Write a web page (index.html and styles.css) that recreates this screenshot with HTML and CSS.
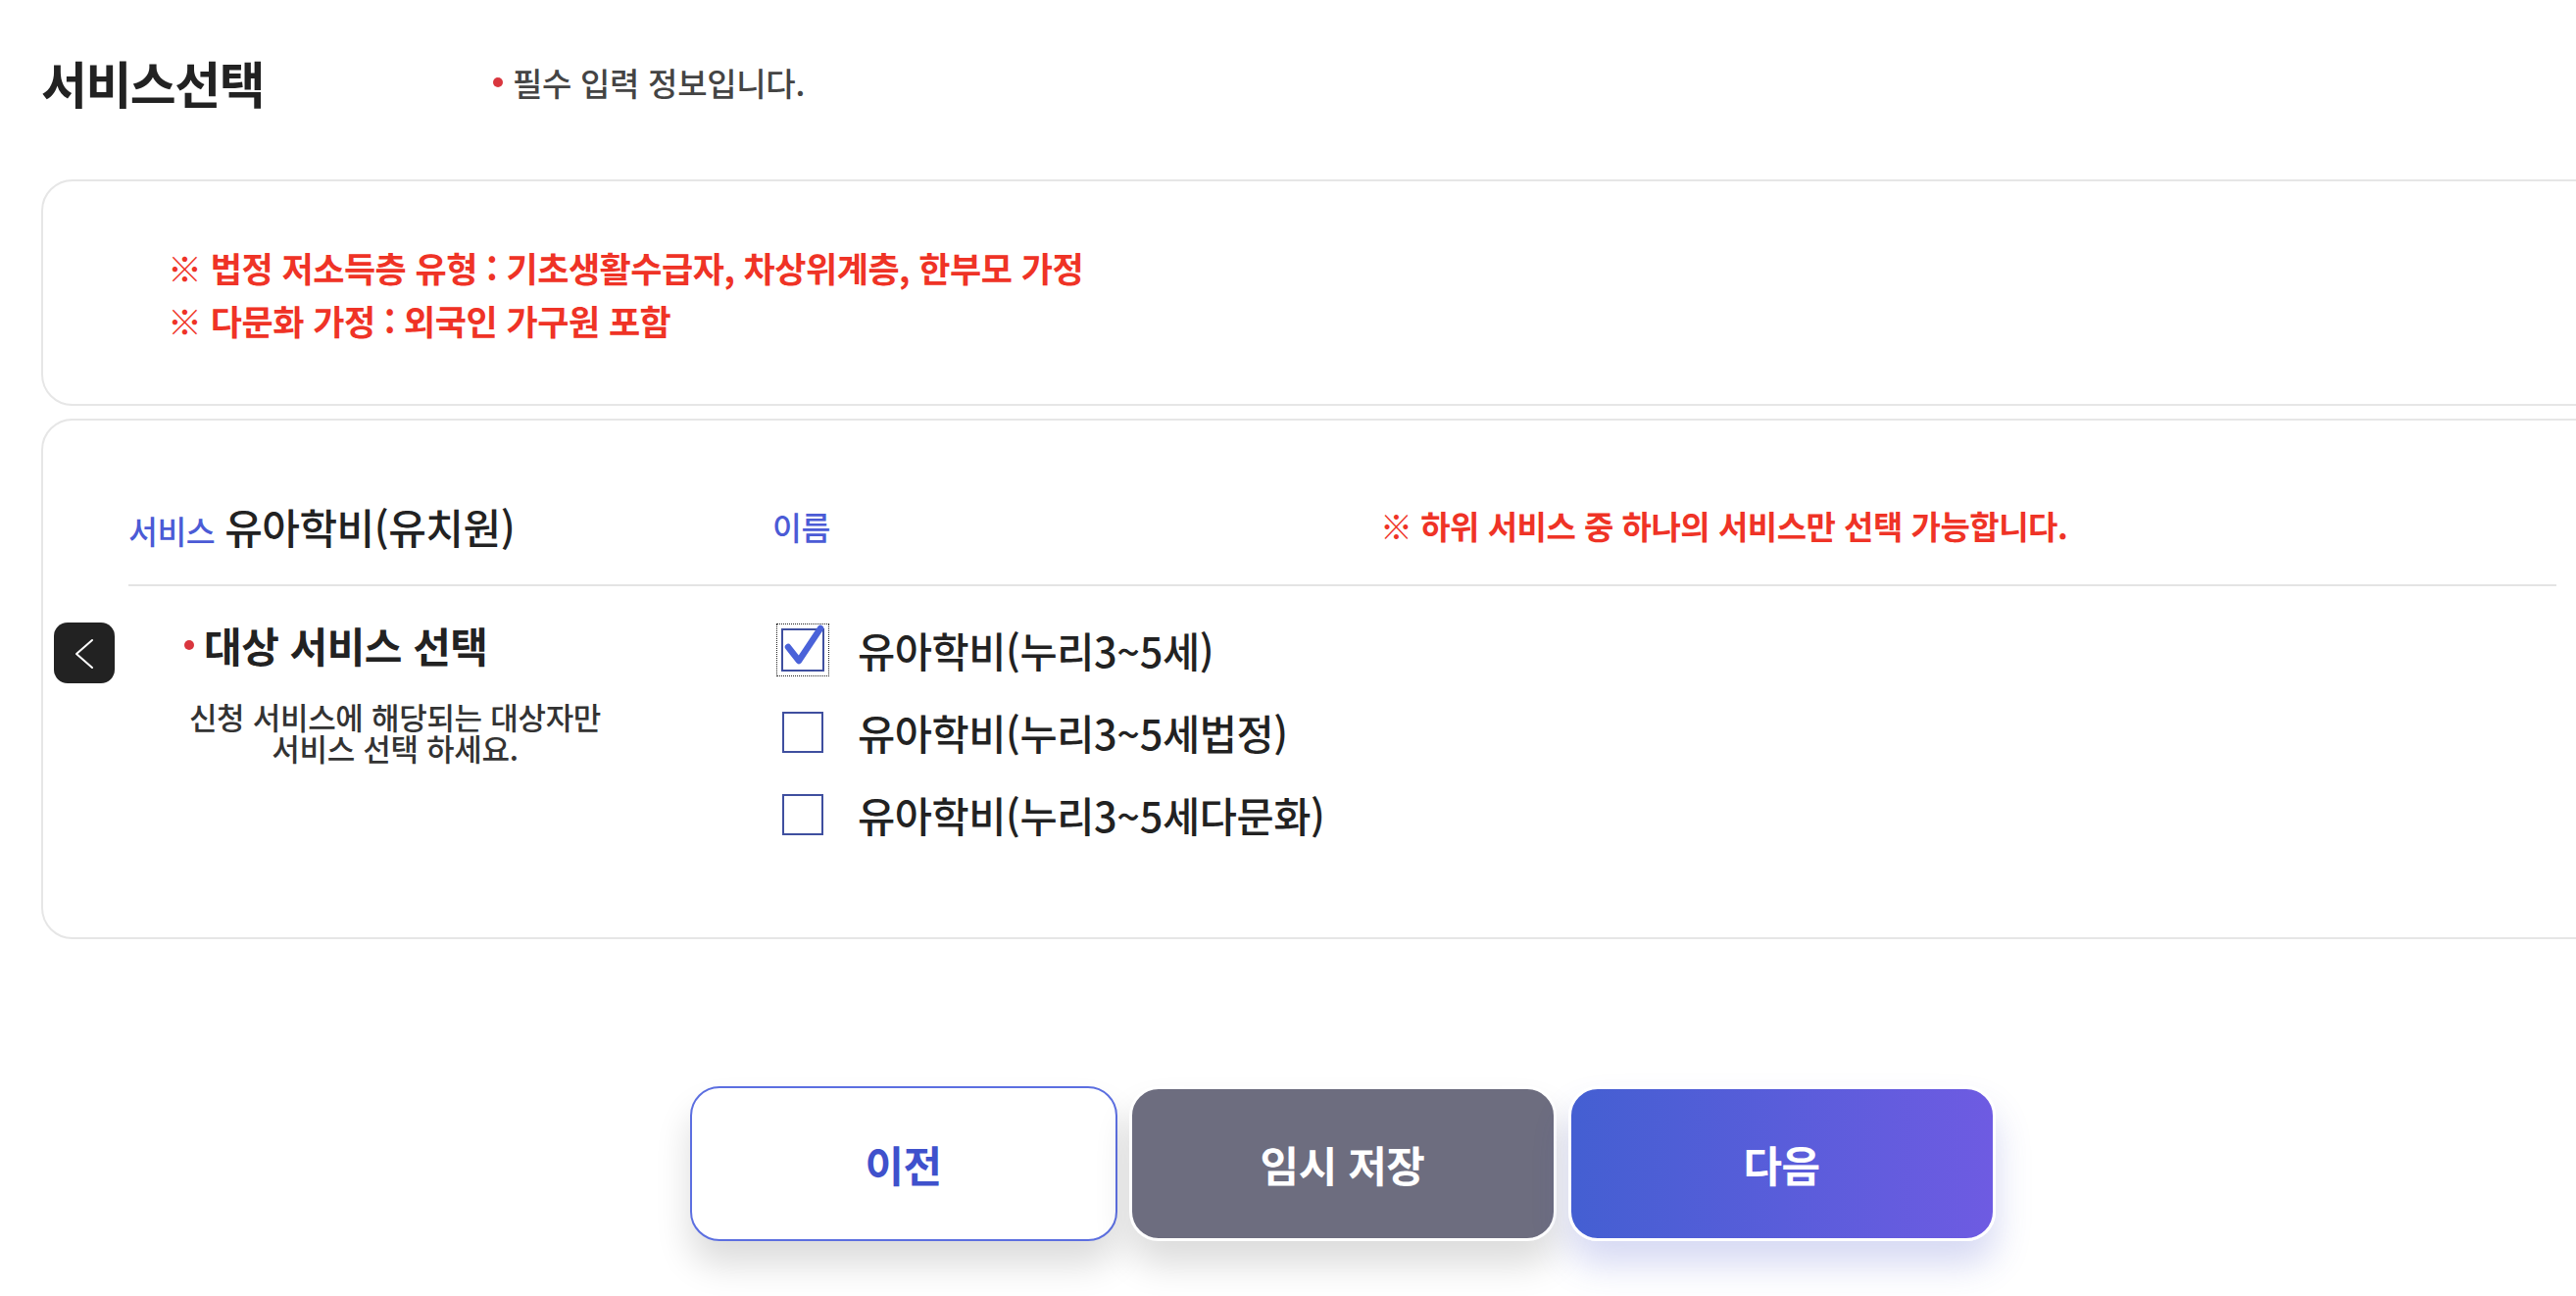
FILE: index.html
```html
<!DOCTYPE html>
<html lang="ko">
<head>
<meta charset="utf-8">
<title>서비스선택</title>
<link rel="stylesheet" href="styles.css">
</head>
<body>
<div class="page">
  <header class="page-head">
    <h1 class="page-title">서비스선택</h1>
    <p class="req-note"><span class="dot"></span>필수 입력 정보입니다.</p>
  </header>

  <section class="card notice">
    <p>※ 법정 저소득층 유형 : 기초생활수급자, 차상위계층, 한부모 가정</p>
    <p>※ 다문화 가정 : 외국인 가구원 포함</p>
  </section>

  <section class="card service">
    <button class="side-back" type="button" aria-label="이전">
      <svg width="62" height="62" viewBox="0 0 62 62"><path d="M39 18 L23 32 L39 46" fill="none" stroke="#fff" stroke-width="2" stroke-linecap="round" stroke-linejoin="round"/></svg>
    </button>
    <div class="svc-head">
      <div class="col-service"><span class="lbl">서비스</span><span class="val">유아학비(유치원)</span></div>
      <div class="col-name"><span class="lbl">이름</span></div>
      <div class="col-warn">※ 하위 서비스 중 하나의 서비스만 선택 가능합니다.</div>
    </div>
    <div class="svc-body">
      <div class="body-left">
        <h2 class="body-title"><span class="dot"></span>대상 서비스 선택</h2>
        <p class="body-desc">신청 서비스에 해당되는 대상자만<br>서비스 선택 하세요.</p>
      </div>
      <ul class="options">
        <li class="option">
          <span class="check checked">
            <svg width="58" height="58" viewBox="0 0 58 58"><rect x="8" y="9" width="42" height="42" fill="#fff" stroke="#3f4f9f" stroke-width="2"/><path d="M14 27 L25 41 L47 8" fill="none" stroke="#4a62d9" stroke-width="6.5" stroke-linecap="round" stroke-linejoin="round"/></svg>
          </span>
          <span class="opt-label">유아학비(누리3~5세)</span>
        </li>
        <li class="option">
          <span class="check"></span>
          <span class="opt-label">유아학비(누리3~5세법정)</span>
        </li>
        <li class="option">
          <span class="check"></span>
          <span class="opt-label">유아학비(누리3~5세다문화)</span>
        </li>
      </ul>
    </div>
  </section>

  <div class="actions">
    <button class="btn btn-prev" type="button">이전</button>
    <button class="btn btn-save" type="button">임시 저장</button>
    <button class="btn btn-next" type="button">다음</button>
  </div>
</div>
</body>
</html>
```

FILE: styles.css
```css
html {
  overflow: hidden;
  background: #fff;
}
body {
  margin: 0;
  padding: 0;
  font-family: "Noto Sans CJK KR", "Noto Sans", sans-serif;
  color: #222;
}
.page {
  width: 2655px;
  margin-left: 42px;
  padding-top: 52px;
  padding-bottom: 60px;
}
.page-head {
  display: flex;
  align-items: center;
  height: 64px;
  margin-bottom: 67px;
}
.page-title {
  width: 461px;
  margin: 0;
  font-size: 51px;
  font-weight: 700;
  letter-spacing: -1.5px;
  line-height: 64px;
  color: #222;
}
.req-note {
  margin: 0;
  display: flex;
  align-items: center;
  font-size: 33px;
  font-weight: 500;
  letter-spacing: -0.3px;
  color: #444;
}
.dot {
  display: inline-block;
  width: 10px;
  height: 10px;
  border-radius: 50%;
  background: #d9363e;
  margin-right: 10px;
}
.card {
  border: 2px solid #e6e6e6;
  border-radius: 32px;
  background: #fff;
}
.notice {
  padding: 61px 0 58px 127px;
}
.notice p {
  margin: 0;
  font-size: 35px;
  font-weight: 700;
  line-height: 54px;
  color: #ef3326;
  letter-spacing: -0.5px;
}
.service {
  position: relative;
  margin-top: 13px;
  padding: 82px 87px 83px 87px;
}
.side-back {
  position: absolute;
  left: 11px;
  top: 206px;
  width: 62px;
  height: 62px;
  padding: 0;
  border: 0;
  border-radius: 14px;
  background: #222;
  display: flex;
  align-items: center;
  justify-content: center;
}
.svc-head {
  display: flex;
  align-items: center;
  height: 50px;
  padding-bottom: 35px;
  border-bottom: 2px solid #e4e4e4;
}
.col-service {
  width: 657px;
  display: flex;
  align-items: baseline;
}
.col-name {
  width: 620px;
}
.lbl {
  font-size: 32.5px;
  font-weight: 500;
  color: #4b5bd6;
  letter-spacing: -0.5px;
  margin-right: 10px;
}
.val {
  font-size: 42px;
  font-weight: 500;
  color: #222;
  letter-spacing: -0.5px;
}
.col-warn {
  font-size: 33px;
  font-weight: 700;
  color: #ef3326;
  letter-spacing: -0.5px;
}
.svc-body {
  display: flex;
  padding-top: 23px;
}
.body-left {
  width: 667px;
}
.body-title {
  margin: 9px 0 0;
  padding-left: 57px;
  display: flex;
  align-items: center;
  font-size: 42px;
  font-weight: 700;
  line-height: 56px;
  letter-spacing: -0.5px;
  color: #222;
}
.body-desc {
  width: 544px;
  margin: 29px 0 0;
  text-align: center;
  font-size: 31px;
  font-weight: 500;
  line-height: 32px;
  letter-spacing: -0.3px;
  color: #333;
}
.options {
  list-style: none;
  margin: 0;
  padding: 0;
}
.option {
  display: flex;
  align-items: center;
  height: 84px;
}
.check {
  position: relative;
  width: 42px;
  height: 42px;
  box-sizing: border-box;
  border: 2px solid #3f4f9f;
  background: #fff;
  margin-right: 35px;
  flex: none;
}
.check.checked {
  border: 0;
  outline: 1px dotted #222;
  outline-offset: 5px;
}
.check.checked svg {
  position: absolute;
  left: -8px;
  top: -9px;
}
.opt-label {
  font-size: 41.5px;
  font-weight: 500;
  letter-spacing: -0.4px;
  color: #222;
}
.actions {
  display: flex;
  justify-content: center;
  align-items: flex-start;
  gap: 12px;
  margin-top: 150px;
}
.btn {
  box-sizing: border-box;
  width: 436px;
  height: 158px;
  border-radius: 30px;
  font-family: "Noto Sans CJK KR", sans-serif;
  font-size: 43px;
  font-weight: 700;
  letter-spacing: -0.5px;
  cursor: pointer;
}
.btn-prev {
  background: #fff;
  border: 2px solid #5c6fe0;
  color: #3f51cc;
  box-shadow: 0 24px 36px rgba(0, 0, 0, 0.14);
}
.btn-save {
  background: #6d6d7f;
  border: 3px solid #fff;
  color: #fff;
  box-shadow: 0 24px 36px rgba(0, 0, 0, 0.14);
}
.btn-next {
  background: linear-gradient(90deg, #445fd2, #6e5be2);
  border: 3px solid #fff;
  color: #fff;
  box-shadow: 0 24px 36px rgba(70, 80, 200, 0.22);
}
```
